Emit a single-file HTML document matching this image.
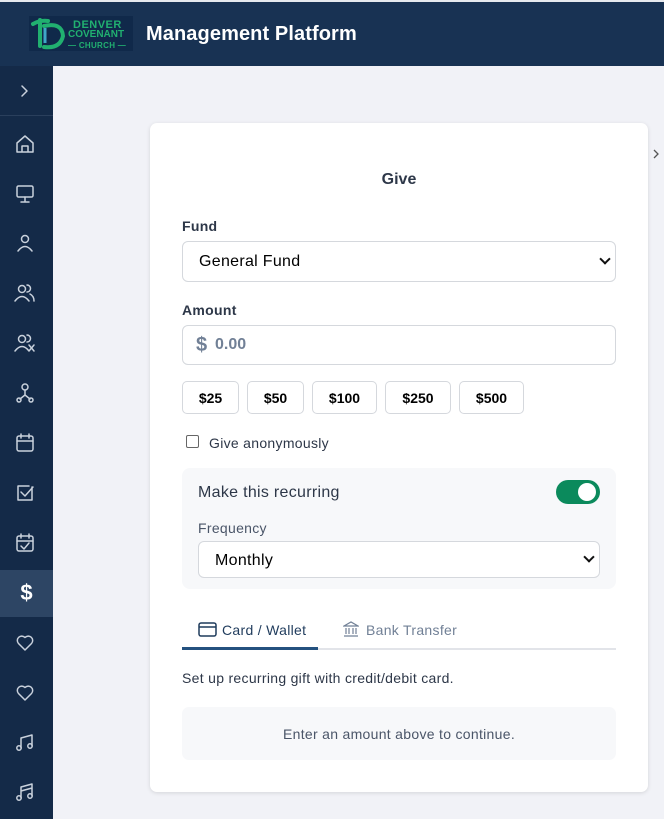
<!DOCTYPE html>
<html><head><meta charset="utf-8"><style>
*{box-sizing:border-box;margin:0;padding:0}
body{width:664px;height:819px;overflow:hidden;background:#f1f2f7;font-family:"Liberation Sans",sans-serif;position:relative}
.a{position:absolute}
.hdr{left:0;top:0;width:664px;height:66px;background:#183253;border-top:2px solid #e6e9ee}
.sb{left:0;top:66px;width:53px;height:753px;background:#142a48}
.card{left:150px;top:123px;width:498px;height:669px;background:#fff;border-radius:7px;box-shadow:0 1px 4px rgba(0,0,0,.12)}
.lbl{font-size:14px;font-weight:bold;color:#2d3748}
.inp{border:1px solid #d5d8dd;border-radius:6px;background:#fff}
.btn{top:381px;height:33px;border:1px solid #d5d8dd;border-radius:5px;background:#fff;font-size:14px;font-weight:bold;color:#000;text-align:center;line-height:33px}
.chev{position:absolute;right:6px;width:8px;height:8px;border-right:2px solid #111;border-bottom:2px solid #111;transform:rotate(45deg)}
.ls{letter-spacing:.3px}
</style></head><body>
<div class="a hdr"></div>
<div class="a" style="left:29px;top:16px;width:104px;height:35px;background:#10294a"></div>
<svg class="a" style="left:30px;top:16px" width="40" height="36" viewBox="0 0 40 36"><path d="M3 8 Q10 4 18 5 M10 4 L10 30 M14 10 Q32 6 33 20 Q30 33 14 31" fill="none" stroke="#21b070" stroke-width="4" stroke-linecap="round"/><path d="M15 12 L15 27" stroke="#3fa8c8" stroke-width="3"/></svg>
<div class="a" style="left:73px;top:20px;font-size:11px;font-weight:bold;color:#21b070;line-height:10px;letter-spacing:.5px">DENVER</div>
<div class="a" style="left:68px;top:30px;font-size:10px;font-weight:bold;color:#21b070;line-height:10px">COVENANT</div>
<div class="a" style="left:68px;top:41px;font-size:8px;font-weight:bold;color:#21b070;line-height:9px;letter-spacing:.3px">—&nbsp;CHURCH&nbsp;—</div>
<div class="a" style="left:146px;top:23px;font-size:20px;font-weight:bold;color:#fff;letter-spacing:.1px">Management Platform</div>
<div class="a sb"></div>
<div class="a" style="left:0;top:115px;width:53px;height:1px;background:#2a3f5c"></div>
<div class="a" style="left:0;top:570px;width:53px;height:47px;background:#2d4564"></div>
<svg class="a" style="left:0;top:66px" width="53" height="753" viewBox="0 66 53 753" fill="none" stroke="#c9d1dc" stroke-width="1.5" stroke-linecap="round" stroke-linejoin="round">
<path d="M22 86 L27 91 L22 96"/>
<path d="M17 143 L25 136 L33 143 L33 152 L17 152 Z M22 152 L22 146 L28 146 L28 152"/>
<rect x="17" y="186" width="16" height="11" rx="1.5"/><path d="M25 197 V202 M21 202 H29"/>
<circle cx="25" cy="239" r="3.5"/><path d="M18 251 Q25 242 32 251"/>
<circle cx="22" cy="289" r="3.5"/><path d="M15 301 Q22 292 29 301 M27 285 A3.5 3.5 0 0 1 27 292 M30 294 Q34 296 34 301"/>
<circle cx="22" cy="339" r="3.5"/><path d="M15 351 Q22 342 29 351 M27 335 A3.5 3.5 0 0 1 27 342 M29 345 L34 351 M34 345 L29 351"/>
<circle cx="25" cy="387" r="3"/><path d="M25 390 V395 L20 399 M25 395 L30 399"/><circle cx="19" cy="400" r="2"/><circle cx="31" cy="400" r="2"/>
<rect x="17" y="436" width="16" height="15" rx="2"/><path d="M17 441 H33 M21 434 V438 M29 434 V438"/>
<path d="M32 487 V500 H18 V486 H29 M21 492 L25 496 L33 487"/>
<rect x="17" y="536" width="16" height="15" rx="2"/><path d="M17 541 H33 M21 534 V538 M29 534 V538 M21 546 L24 549 L29 543"/>
<path d="M25 650 L18.5 643.5 A4.2 4.2 0 0 1 25 637.5 A4.2 4.2 0 0 1 31.5 643.5 Z"/>
<path d="M25 700 L18.5 693.5 A4.2 4.2 0 0 1 25 687.5 A4.2 4.2 0 0 1 31.5 693.5 Z"/>
<path d="M21 748 V738 L32 735 V746"/><circle cx="19" cy="748" r="2.2"/><circle cx="30" cy="746" r="2.2"/>
<path d="M21 798 V787 L32 784 V796 M21 791 L32 788"/><circle cx="19" cy="798" r="2.2"/><circle cx="30" cy="796" r="2.2"/>
</svg>
<div class="a" style="left:0;top:581px;width:53px;text-align:center;font-size:22px;font-weight:bold;color:#fff;line-height:24px">$</div>
<svg class="a" style="left:652px;top:148px" width="8" height="12"><path d="M2 2 L6 6 L2 10" fill="none" stroke="#555" stroke-width="1.3"/></svg>
<div class="a card"></div>
<div class="a" style="left:150px;top:171px;width:498px;text-align:center;font-size:16px;font-weight:bold;color:#2d3748">Give</div>
<div class="a lbl ls" style="left:182px;top:218px">Fund</div>
<div class="a inp" style="left:182px;top:241px;width:434px;height:41px"><span class="a ls" style="left:16px;top:11px;font-size:16px;color:#000">General Fund</span><span class="chev" style="top:13px"></span></div>
<div class="a lbl ls" style="left:182px;top:302px">Amount</div>
<div class="a inp" style="left:182px;top:325px;width:434px;height:40px"><span class="a" style="left:13px;top:8px;font-size:20px;font-weight:bold;color:#718096">$</span><span class="a" style="left:32px;top:10px;font-size:16px;font-weight:bold;color:#718096">0.00</span></div>
<div class="a btn" style="left:182px;width:57px">$25</div>
<div class="a btn" style="left:247px;width:57px">$50</div>
<div class="a btn" style="left:312px;width:65px">$100</div>
<div class="a btn" style="left:385px;width:66px">$250</div>
<div class="a btn" style="left:459px;width:65px">$500</div>
<div class="a" style="left:186px;top:435px;width:13px;height:13px;border:1px solid #666;border-radius:2px;background:#fff"></div>
<div class="a ls" style="left:209px;top:435px;font-size:14px;color:#2d3748">Give anonymously</div>
<div class="a" style="left:182px;top:468px;width:434px;height:121px;background:#f7f8fa;border-radius:8px"></div>
<div class="a ls" style="left:198px;top:484px;font-size:16px;color:#2d3748">Make this recurring</div>
<div class="a" style="left:556px;top:480px;width:44px;height:24px;border-radius:12px;background:#0b8a5c"><div class="a" style="left:22px;top:3px;width:18px;height:18px;border-radius:50%;background:#fff"></div></div>
<div class="a ls" style="left:198px;top:520px;font-size:14px;color:#4a5568">Frequency</div>
<div class="a inp" style="left:198px;top:541px;width:402px;height:37px"><span class="a ls" style="left:16px;top:10px;font-size:16px;color:#000">Monthly</span><span class="chev" style="top:11px"></span></div>
<svg class="a" style="left:198px;top:622px" width="19" height="15"><rect x="1" y="1" width="17" height="13" rx="2" fill="none" stroke="#1f3b5c" stroke-width="1.5"/><path d="M1 5 H18" stroke="#1f3b5c" stroke-width="1.5"/></svg>
<div class="a ls" style="left:222px;top:622px;font-size:14px;color:#1f3b5c">Card / Wallet</div>
<svg class="a" style="left:343px;top:621px" width="16" height="16" fill="none" stroke="#718096" stroke-width="1.2"><path d="M1 5 L8 1 L15 5 Z M3 7 V13 M6 7 V13 M10 7 V13 M13 7 V13 M1 15 H15"/></svg>
<div class="a ls" style="left:366px;top:622px;font-size:14px;color:#718096">Bank Transfer</div>
<div class="a" style="left:182px;top:648px;width:434px;height:2px;background:#e2e4e9"></div>
<div class="a" style="left:182px;top:647px;width:136px;height:3px;background:#24517f"></div>
<div class="a ls" style="left:182px;top:670px;font-size:14px;color:#2d3748">Set up recurring gift with credit/debit card.</div>
<div class="a ls" style="left:182px;top:707px;width:434px;height:53px;background:#f7f8fa;border-radius:7px;text-align:center;line-height:54px;font-size:14px;color:#4a5568">Enter an amount above to continue.</div>
</body></html>
